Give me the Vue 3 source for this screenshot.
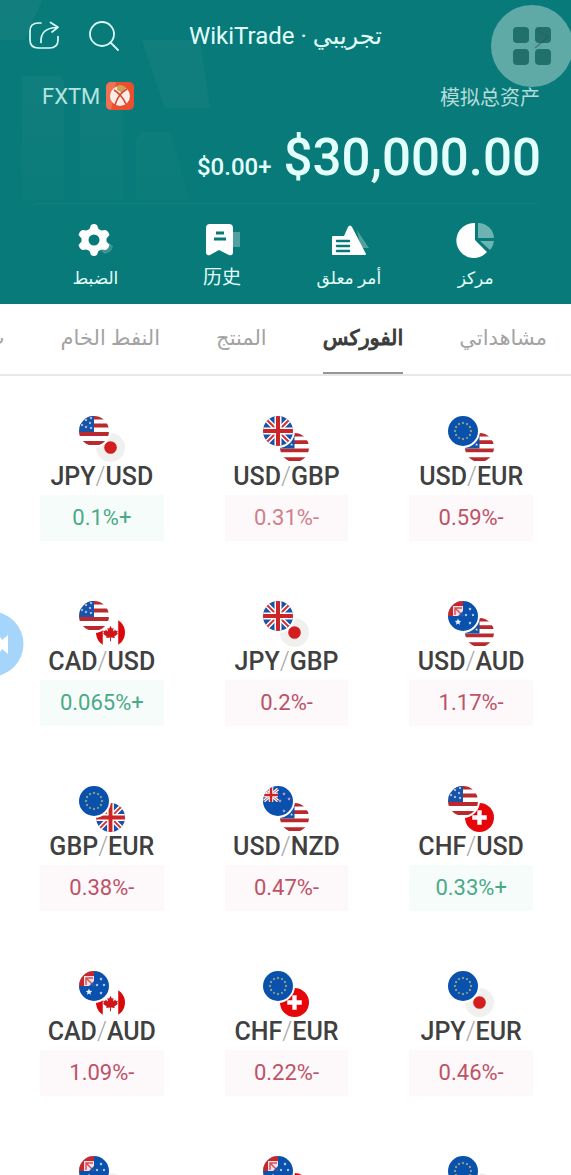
<script setup>
const actions = [
  { icon: 'gear', label: 'الضبط' },
  { icon: 'mark', label: '历史', han: true },
  { icon: 'order', label: 'أمر معلق' },
  { icon: 'pie', label: 'مركز' },
]

const tabs = [
  { label: 'مشاهداتي' },
  { label: 'الفوركس', active: true },
  { label: 'المنتج' },
  { label: 'النفط الخام' },
  { label: 'ب' },
]

const pairs = [
  { a: 'JPY', b: 'USD', flags: ['usd', 'jpy'], pct: '0.1%+', up: true },
  { a: 'USD', b: 'GBP', flags: ['gbp', 'usd'], pct: '0.31%-', soft: true },
  { a: 'USD', b: 'EUR', flags: ['eur', 'usd'], pct: '0.59%-' },
  { a: 'CAD', b: 'USD', flags: ['usd', 'cad'], pct: '0.065%+', up: true },
  { a: 'JPY', b: 'GBP', flags: ['gbp', 'jpy'], pct: '0.2%-' },
  { a: 'USD', b: 'AUD', flags: ['aud', 'usd'], pct: '1.17%-' },
  { a: 'GBP', b: 'EUR', flags: ['eur', 'gbp'], pct: '0.38%-' },
  { a: 'USD', b: 'NZD', flags: ['nzd', 'usd'], pct: '0.47%-' },
  { a: 'CHF', b: 'USD', flags: ['usd', 'chf'], pct: '0.33%+', up: true },
  { a: 'CAD', b: 'AUD', flags: ['aud', 'cad'], pct: '1.09%-' },
  { a: 'CHF', b: 'EUR', flags: ['eur', 'chf'], pct: '0.22%-' },
  { a: 'JPY', b: 'EUR', flags: ['eur', 'jpy'], pct: '0.46%-' },
  { flags: ['aud', 'jpy'] },
  { flags: ['aud', 'chf'] },
  { flags: ['eur', 'jpy'] },
]

const star = (cx, cy, r) => {
  const pts = []
  for (let i = 0; i < 10; i++) {
    const rad = i % 2 ? r * 0.45 : r
    const t = (Math.PI / 5) * i - Math.PI / 2
    pts.push(`${(cx + rad * Math.cos(t)).toFixed(2)},${(cy + rad * Math.sin(t)).toFixed(2)}`)
  }
  return pts.join(' ')
}
const euStars = Array.from({ length: 12 }, (_, i) => {
  const t = (Math.PI / 6) * i
  return star(15 + 8 * Math.sin(t), 15 - 8 * Math.cos(t), 1.4)
})
const usStars = [[3, 9], [7, 4], [7, 11], [11, 7], [12, 2], [12, 12]].map(([x, y]) => star(x, y, 1.5))
const auStars = [[22, 8, 1.7], [25, 14, 1.6], [18, 14, 1.6], [22, 22, 1.7], [10, 21, 3.4]].map((s) => star(...s))
const nzStars = [[21, 8], [26, 13], [17, 15], [21, 25]].map(([x, y]) => star(x, y, 1.9))
</script>

<template>
  <div class="page">
    <svg class="defs" aria-hidden="true">
      <defs>
        <clipPath id="disc"><circle cx="15" cy="15" r="15" /></clipPath>
        <symbol id="usd" viewBox="0 0 30 30">
          <g clip-path="url(#disc)">
            <rect width="30" height="30" fill="#fff" />
            <path d="M0 1.500h30M0 9.500h30M0 18h30M0 27h30" stroke="#b9292d" stroke-width="4" />
            <rect width="15" height="16" fill="#1853a8" />
            <polygon v-for="p in usStars" :key="p" :points="p" fill="#dcecff" />
          </g>
        </symbol>
        <symbol id="jpy" viewBox="0 0 30 30">
          <circle cx="15" cy="15" r="15" fill="#f0f0ef" />
          <circle cx="15" cy="15" r="6.500" fill="#d31d1f" />
        </symbol>
        <symbol id="gbp" viewBox="0 0 30 30">
          <g clip-path="url(#disc)">
            <rect width="30" height="30" fill="#1853a8" />
            <path d="M0 0l30 30M30 0L0 30" stroke="#fff" stroke-width="5" />
            <path d="M0 0l30 30M30 0L0 30" stroke="#d5322f" stroke-width="2" />
            <path d="M15 0v30M0 15h30" stroke="#fff" stroke-width="7" />
            <path d="M15 0v30M0 15h30" stroke="#cc2528" stroke-width="4" />
          </g>
        </symbol>
        <symbol id="eur" viewBox="0 0 30 30">
          <circle cx="15" cy="15" r="15" fill="#0a51ad" />
          <polygon v-for="p in euStars" :key="p" :points="p" fill="#c6c86c" />
        </symbol>
        <symbol id="cad" viewBox="0 0 30 30">
          <g clip-path="url(#disc)">
            <rect width="30" height="30" fill="#fff" />
            <path d="M0 0h7v30H0zM23 0h7v30h-7z" fill="#d8080b" />
            <path d="M15 8l1.500 3 1.700-1-.6 4 2.400-2 .5 1.400 2.200-.2-.9 2.300 1 .7-3.800 3 .4 1.400-3.900-.5V24h-1v-3.900l-3.900.5.400-1.400-3.800-3 1-.7-.9-2.300 2.200.2.500-1.400 2.400 2-.6-4 1.700 1z" fill="#cf1719" />
          </g>
        </symbol>
        <symbol id="chf" viewBox="0 0 30 30">
          <circle cx="15" cy="15" r="15" fill="#e60509" />
          <path d="M15 7.500v15M7.500 15h15" stroke="#fff" stroke-width="4.500" />
        </symbol>
        <symbol id="aud" viewBox="0 0 30 30">
          <g clip-path="url(#disc)">
            <rect width="30" height="30" fill="#0a51ad" />
            <rect width="15" height="15" fill="#f6dfe3" />
            <path d="M0 2.500h15M2.500 0v15" stroke="#c4282c" stroke-width="5" />
            <path d="M7 7l8 8M7 14V7h7" fill="none" stroke="#d4525a" stroke-width="1.500" />
            <path d="M15 10v5h-5z" fill="#2358aa" />
            <polygon v-for="p in auStars" :key="p" :points="p" fill="#e9f4ff" />
          </g>
        </symbol>
        <symbol id="nzd" viewBox="0 0 30 30">
          <g clip-path="url(#disc)">
            <rect width="30" height="30" fill="#0a51ad" />
            <path d="M1 3l14 12M15 3L1 15" stroke="#fff" stroke-width="3" />
            <path d="M1 3l14 12M15 3L1 15" stroke="#cf3c45" stroke-width="1" />
            <path d="M8 0v16M0 9h15" stroke="#fff" stroke-width="4.500" />
            <path d="M8 0v16M0 9h15" stroke="#cc2528" stroke-width="2.500" />
            <polygon v-for="p in nzStars" :key="p" :points="p" fill="#cfa3c7" />
          </g>
        </symbol>
      </defs>
    </svg>

    <header class="hero">
      <svg class="shade" width="220" height="200" viewBox="0 0 220 200" aria-hidden="true">
        <defs>
          <linearGradient id="fade" gradientUnits="userSpaceOnUse" x1="0" y1="0" x2="0" y2="200">
            <stop offset="0" stop-color="#fff" stop-opacity=".04" />
            <stop offset="1" stop-color="#fff" stop-opacity=".015" />
          </linearGradient>
        </defs>
        <g fill="url(#fade)">
          <path d="M0 0h42L25 40H0z" />
          <path d="M22 76h38l4 6v118H22z" />
          <path d="M80 102h43v98H80z" />
          <path d="M136 140l6-8h28l20 68h-54z" />
          <path d="M142 40h58l10 68h-45z" />
        </g>
      </svg>

      <div class="bar">
        <div class="tools">
          <button class="tool" aria-label="مشاركة">
            <svg width="32" height="30" viewBox="0 0 32 30" fill="none" stroke="#d9fbf8" stroke-width="1.700" stroke-linecap="round" stroke-linejoin="round">
              <path d="M13 2h-2.500Q2 2 2 10v9q0 8 8.500 8h11q8.500 0 8.500-8v-3.500" />
              <path d="M13 21.500Q12 7 29 6.500M22.500 1.500L30 6.300 24 11" />
            </svg>
          </button>
          <button class="tool" aria-label="بحث">
            <svg width="32" height="32" viewBox="0 0 32 32" fill="none" stroke="#d9fbf8" stroke-width="1.800" stroke-linecap="round">
              <circle cx="14" cy="14" r="12" /><path d="M22.500 22.500L30 30" />
            </svg>
          </button>
        </div>
        <h1 class="title">WikiTrade · تجريبي</h1>
        <button class="floating" aria-label="القائمة">
          <svg width="82" height="84" viewBox="0 0 82 84">
            <circle cx="41" cy="42" r="41" fill="#5faaa7" />
            <g fill="#22706d">
              <rect x="22" y="23" width="16" height="16" rx="4" /><rect x="44" y="23" width="16" height="16" rx="4" />
              <rect x="22" y="45" width="16" height="16" rx="4" /><rect x="44" y="45" width="16" height="16" rx="4" />
            </g>
            <path d="M45 25l12 8-13 11" fill="none" stroke="#38595a" stroke-opacity=".6" stroke-width="1.500" />
          </svg>
        </button>
      </div>

      <div class="account">
        <span class="broker">FXTM
          <svg width="28" height="28" viewBox="0 0 28 28" aria-hidden="true">
            <rect width="28" height="28" rx="5" fill="#e8502f" />
            <path d="M5 0h5L5 28a5 5 0 0 1-5-5V5a5 5 0 0 1 5-5z" fill="#ee7154" />
            <circle cx="14" cy="14" r="10" fill="#fbeee9" />
            <path d="M11 4q5-3 9 2l-4 6q-2-3-5-4z" fill="#cfa158" />
            <path d="M8 8q8 5 12 14M21 7q-9 5-12 16" fill="none" stroke="#d6492e" stroke-width="1.600" />
          </svg>
        </span>
        <span class="caption">模拟总资产</span>
      </div>

      <div class="balance">
        <span class="change">$0.00+</span>
        <span class="total">$30,000.00</span>
      </div>

      <nav class="actions">
        <button v-for="a in actions" :key="a.icon" class="action">
          <svg width="36" height="36" viewBox="0 0 36 36" aria-hidden="true">
            <g v-if="a.icon === 'gear'">
              <path d="M27 21h5l4 3-2 5-6 3-5-4z" fill="#5ca8a6" fill-opacity=".6" />
              <path d="M14 3q3-2 6 0l1.500 4 3 1.500 4-.5q3 1 4 5l-3 3.500v3l3 3.500q-1 4-4 5l-4-.5-3 1.500-1.500 4q-3 2-6 0l-1.500-4-3-1.500-4 .5q-3-1-4-5l3-3.500v-3l-3-3.500q1-4 4-5l4 .5 3-1.500z" fill="#fff" />
              <circle cx="17" cy="18" r="5.500" fill="#08797a" />
            </g>
            <g v-else-if="a.icon === 'mark'">
              <path d="M29 10h7v15h-7z" fill="#4fa09f" />
              <path d="M6 2h19q4 0 4 4v24q0 4-4 3l-10-5-9 5q-4 1-4-3V6q0-4 4-4z" fill="#fff" />
              <path d="M12 11h8M10 17h12" stroke="#08797a" stroke-width="3" />
            </g>
            <g v-else-if="a.icon === 'order'">
              <path d="M26 8l12 18h-8z" fill="#4fa09f" />
              <path d="M1 15q0-1 1-1h11l4-9q2-3 4 0l14 27q0 1-1 1H2q-1 0-1-1z" fill="#fff" />
              <path d="M6 19h12M6 24h12M6 29h12" stroke="#08797a" stroke-width="2.500" stroke-linecap="round" />
            </g>
            <g v-else>
              <path d="M17 1v17l12 12A17.500 17.500 0 1 1 17 1z" fill="#fff" />
              <path d="M20 1a16 16 0 0 1 16 15H20z" fill="#6db3b1" />
              <path d="M22 19h14q-1 6-4 9z" fill="#6db3b1" />
            </g>
          </svg>
          <span :class="{ han: a.han }">{{ a.label }}</span>
        </button>
      </nav>
    </header>

    <nav class="tabs" dir="rtl">
      <a v-for="t in tabs" :key="t.label" href="#" :class="['tab', { active: t.active }]">{{ t.label }}</a>
    </nav>

    <main class="grid">
      <article v-for="(p, i) in pairs" :key="i" class="card">
        <svg class="flags" width="48" height="47" viewBox="0 0 48 47" aria-hidden="true">
          <use :href="'#' + p.flags[1]" x="18" y="17" width="29" height="29" />
          <circle cx="16" cy="15" r="17" fill="#fff" />
          <use :href="'#' + p.flags[0]" x="1" y="0" width="30" height="30" />
        </svg>
        <h2 v-if="p.a" class="name">{{ p.a }}<span class="slash">/</span>{{ p.b }}</h2>
        <p v-if="p.pct" :class="['pct', { up: p.up, soft: p.soft }]">{{ p.pct }}</p>
      </article>
    </main>

    <button class="recorder" aria-label="تسجيل">
      <svg width="24" height="66" viewBox="0 0 24 66">
        <circle cx="-9" cy="33" r="32.500" fill="#a5d5fb" />
        <path d="M0 26l2 3 6-5v19l-6-5-2 3z" fill="#fff" />
      </svg>
    </button>
  </div>
</template>

<style>
body {
  margin: 0;
  background: #fff;
}
</style>

<style scoped>
.page {
  position: relative;
  display: flex;
  flex-direction: column;
  height: 100vh;
  overflow: hidden;
  background: #fff;
  font-family: Roboto, "Noto Sans", "Noto Sans CJK SC", "DejaVu Sans", sans-serif;
}
.defs {
  position: absolute;
  width: 0;
  height: 0;
}
button {
  padding: 0;
  border: 0;
  background: none;
  color: inherit;
  font: inherit;
}
svg {
  display: block;
}
.hero {
  position: relative;
  flex: none;
  padding-bottom: 12px;
  background: #087a79;
  color: #e3fffc;
}
.shade {
  position: absolute;
  top: 0;
  left: 0;
}
.bar {
  position: relative;
  display: flex;
  align-items: center;
  justify-content: center;
  height: 72px;
}
.tools {
  position: absolute;
  left: 28px;
  display: flex;
  align-items: center;
  gap: 28px;
}
.title {
  margin: 0;
  font-size: 24px;
  line-height: 32px;
  font-weight: 400;
}
.floating {
  position: absolute;
  top: 4px;
  right: -2px;
}
.account {
  position: relative;
  display: flex;
  align-items: center;
  justify-content: space-between;
  height: 48px;
  padding: 0 31px 0 42px;
}
.broker {
  display: flex;
  align-items: center;
  gap: 6px;
  color: #b5e3e0;
  font-size: 22px;
}
.caption {
  color: #b5dcda;
  font-size: 20px;
}
.balance {
  position: relative;
  display: flex;
  align-items: baseline;
  justify-content: flex-end;
  gap: 12px;
  height: 83px;
  padding-right: 30px;
  line-height: 76px;
}
.change {
  font-size: 24px;
  font-weight: 500;
}
.total {
  font-size: 51px;
  font-weight: 500;
}
.actions {
  position: relative;
  display: grid;
  grid-template-columns: repeat(4, 1fr);
  margin: 0 32px;
  padding-top: 18px;
  border-top: 1px solid #15817f;
  border-radius: 6px;
}
.action {
  display: flex;
  flex-direction: column;
  align-items: center;
  gap: 6px;
  font-size: 17px;
  line-height: 28px;
}
.action svg {
  overflow: visible;
}
.han {
  font-size: 19px;
}
.tabs {
  display: flex;
  flex: none;
  gap: 56px;
  box-sizing: border-box;
  height: 72px;
  padding: 0 24px;
  overflow: hidden;
  border-bottom: 2px solid #e8e8e8;
}
.tab {
  flex: none;
  box-sizing: border-box;
  height: 70px;
  color: #a3a3a3;
  font-size: 21px;
  line-height: 68px;
  text-decoration: none;
  white-space: nowrap;
}
.tab.active {
  border-bottom: 2px solid #979797;
  color: #3c3c3c;
  -webkit-text-stroke: 1px #3c3c3c;
}
.grid {
  display: grid;
  grid-template-columns: repeat(3, 1fr);
  grid-auto-rows: 125px;
  gap: 60px 61px;
  padding: 40px 38px 0 40px;
}
.card {
  display: flex;
  flex-direction: column;
  align-items: center;
}
.name {
  margin: 0 0 4px;
  color: #404040;
  font-size: 25px;
  line-height: 28px;
  font-weight: 500;
  white-space: nowrap;
}
.slash {
  color: #a8a8a8;
  font-weight: 300;
}
.pct {
  align-self: stretch;
  margin: 0;
  background: #fdf8f9;
  color: #bd5268;
  font-size: 22px;
  line-height: 46px;
  text-align: center;
}
.pct.soft {
  color: #cf7f8c;
}
.pct.up {
  background: #f6fcfa;
  color: #4aaa87;
}
.recorder {
  position: absolute;
  top: 611px;
  left: 0;
}
</style>
